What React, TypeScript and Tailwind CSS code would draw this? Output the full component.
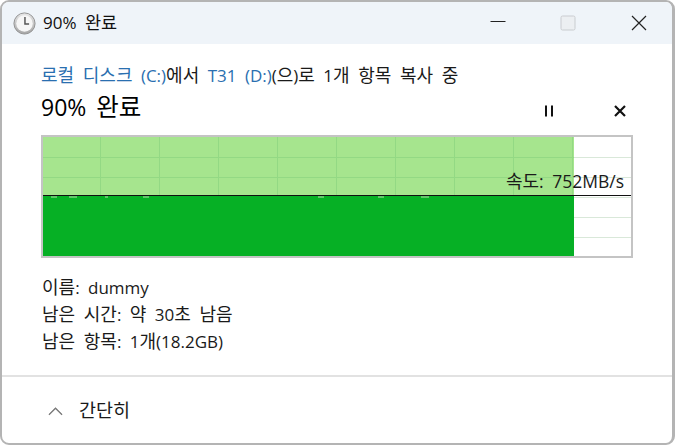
import React from 'react';

const font = "font-['Open_Sans','Noto_Sans_CJK_KR',sans-serif] [word-spacing:4px]";

// hangul runs a bit bigger than latin, the fallback CJK font is narrower than the original
const K: React.FC<{ children: React.ReactNode; className?: string }> = ({ children, className }) => (
  <span className={`leading-none ${className ?? 'text-[18px]'}`}>{children}</span>
);

const SpeedGraph: React.FC = () => {
  const columns = [60, 119, 178, 237, 296, 355, 414, 473, 532];
  const rows = [20, 40, 60, 80, 100];
  return (
    <div className="relative ml-[41px] mt-[11px] h-[123px] w-[592px] border-2 border-[#c4c4c4] bg-white">
      <svg width="588" height="119" viewBox="0 0 588 119" className="block">
        {rows.map((y) => (
          <line key={y} x1="0" x2="588" y1={y + 0.5} y2={y + 0.5} stroke="#d9e8d9" />
        ))}
        <rect x="0" y="0" width="531" height="59" fill="#a6e58e" />
        <rect x="0" y="59" width="531" height="60" fill="#06b025" />
        {columns.map((x) => (
          <line key={x} x1={x - 2.5} x2={x - 2.5} y1="0" y2="59" stroke="#93d984" />
        ))}
        {[20, 40].map((y) => (
          <line key={y} x1="0" x2="531" y1={y + 0.5} y2={y + 0.5} stroke="#93d984" />
        ))}
        <path d="M8 60h6M26 60h8M62 60h3M100 60h6M275 60h6M335 60h6M378 60h8" stroke="#7fcf80" strokeWidth="1.5" />
        <line x1="0" x2="588" y1="58.5" y2="58.5" stroke="#111" strokeWidth="1" />
      </svg>
      <span className="absolute right-[7px] top-[32px] text-[17.5px] leading-[24px] text-[#1a1a1a]">
        <K>속도</K>: 752MB/s
      </span>
    </div>
  );
};

const App: React.FC = () => {
  return (
    <div className={`h-[445px] w-[675px] overflow-hidden bg-white ${font}`}>
      <div className="flex h-[445px] w-[675px] flex-col overflow-hidden rounded-[9px] border-y-2 border-l-2 border-r-[3px] border-[#b4b4b4] bg-white">
        <div className="flex h-[42px] shrink-0 items-center bg-[#eff4f9] pl-[11px]">
          <svg width="23" height="23" viewBox="0 0 25 25" className="shrink-0">
            <defs>
              <linearGradient id="rim" x1="0" y1="0" x2="0" y2="1">
                <stop offset="0" stopColor="#e8e8e8" />
                <stop offset="1" stopColor="#a5a5a5" />
              </linearGradient>
            </defs>
            <circle cx="12.5" cy="12.5" r="11.5" fill="url(#rim)" stroke="#8f8f8f" strokeWidth="1" />
            <circle cx="12.5" cy="12.5" r="9" fill="#f6f6f6" />
            <path d="M13 5.5v7.5h4.5" fill="none" stroke="#555" strokeWidth="1.6" />
          </svg>
          <span className="ml-[7px] text-[17px] leading-[24px] text-[#111]">
            90% <K className="text-[17.5px]">완료</K>
          </span>
          <div className="ml-auto flex items-center">
            <svg width="16" height="16" viewBox="0 0 16 16" className="mr-[54px]">
              <line x1="0.5" x2="15.5" y1="6.5" y2="6.5" stroke="#222" strokeWidth="1" />
            </svg>
            <svg width="16" height="16" viewBox="0 0 16 16" className="mr-[55px]">
              <rect x="1" y="1" width="14" height="14" rx="1.5" fill="#eceff2" stroke="#c9ccd0" strokeWidth="1" />
            </svg>
            <svg width="16" height="16" viewBox="0 0 16 16" className="mr-[25px]">
              <path d="M1 1l14 14M15 1L1 15" stroke="#222" strokeWidth="1.2" />
            </svg>
          </div>
        </div>

        <div className="flex flex-1 flex-col">
          <div className="whitespace-nowrap pl-[39px] pt-[20px] text-[17px] leading-[24px] text-[#1a1a1a]">
            <span className="text-[#2a6fb0]">
              <K>로컬 디스크</K> (C:)
            </span>
            <K>에서</K>{' '}
            <span className="text-[#2a6fb0]">T31 (D:)</span>
            (<K>으</K>)<K>로</K> 1<K>개 항목 복사 중</K>
          </div>
          <div className="flex h-[36px] items-center pl-[39px] pr-[40px]">
            <span className="pt-[1px] text-[23px] leading-[36px] text-black">
              90% <K className="text-[24.5px]">완료</K>
            </span>
            <div className="ml-auto flex items-center pt-[9px]">
              <svg width="10" height="12" viewBox="0 0 10 12" className="mr-[60px]">
                <path d="M2 0.5v11M8 0.5v11" stroke="#111" strokeWidth="2" />
              </svg>
              <svg width="12" height="12" viewBox="0 0 12 12" className="mr-[6px]">
                <path d="M1 1l10 10M11 1L1 11" stroke="#111" strokeWidth="2.2" />
              </svg>
            </div>
          </div>
          <div className="-ml-[2px]">
            <SpeedGraph />
          </div>
          <div className="pl-[40px] pt-[16px] text-[17px] leading-[27px] text-[#1a1a1a]">
            <div>
              <K>이름</K>: dummy
            </div>
            <div>
              <K>남은 시간</K>: <K>약</K> 30<K>초 남음</K>
            </div>
            <div>
              <K>남은 항목</K>: 1<K>개</K>(18.2GB)
            </div>
          </div>
          <div className="mt-[20px] h-[2px] bg-[#e2e2e2]" />
          <div className="flex flex-1 items-center pl-[46px] pt-[1px]">
            <svg width="15" height="10" viewBox="0 0 16 10">
              <path d="M1 9l7-7 7 7" fill="none" stroke="#777" strokeWidth="1.4" />
            </svg>
            <K className="ml-[16px] text-[18.5px] text-[#1a1a1a]">간단히</K>
          </div>
        </div>
      </div>
    </div>
  );
};

export default App;
